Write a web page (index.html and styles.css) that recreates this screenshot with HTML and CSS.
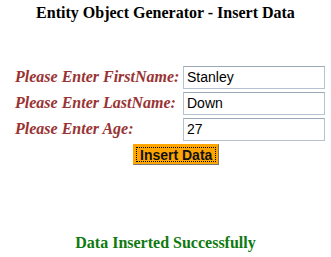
FILE: index.html
```html
<!DOCTYPE html>
<html lang="en">
<head>
  <meta charset="UTF-8"/>
  <title>Entity Object Generator - Insert Data</title>
  <link rel="stylesheet" href="styles.css">
</head>
<body>
<div class="page">
  <h3 class="title">Entity Object Generator - Insert Data</h3>

  <form class="entry-form" onsubmit="return false">
    <div class="row">
      <label for="first">Please Enter FirstName:</label>
      <input type="text" id="first" value="Stanley" />
    </div>
    <div class="row">
      <label for="last">Please Enter LastName:</label>
      <input type="text" id="last" value="Down" />
    </div>
    <div class="row">
      <label for="age">Please Enter Age:</label>
      <input type="text" id="age" value="27" />
    </div>
    <div class="actions">
      <button type="submit" class="insert-btn">Insert Data</button>
    </div>
  </form>

  <p class="status">Data Inserted Successfully</p>
</div>
</body>
</html>
```

FILE: styles.css
```css
body {
  margin: 0;
  background: #fff;
  font-family: "Liberation Serif", "Times New Roman", serif;
}

.page {
  width: 331px;
  padding-top: 4px;
}

.title {
  margin: 0;
  text-align: center;
  font-size: 16px;
  font-weight: bold;
  color: #000;
}

.entry-form {
  margin-top: 42px;
  padding-left: 15px;
}

.row {
  display: flex;
  align-items: center;
  height: 26px;
}

.row label {
  width: 168px;
  font-size: 16px;
  font-weight: bold;
  font-style: italic;
  color: #993333;
}

.row input {
  width: 142px;
  height: 23px;
  box-sizing: border-box;
  padding: 1px 3px;
  border: 1px solid #b5c3d0;
  border-top-color: #9aa8b8;
  font-family: "Liberation Sans", Arial, sans-serif;
  font-size: 14px;
  color: #000;
}

.actions {
  padding-left: 118px;
  margin-top: 2px;
}

.insert-btn {
  background: #ffa500;
  border: 1px solid #ffa500;
  border-right-color: #777;
  border-bottom-color: #777;
  outline: 1px dotted #000;
  outline-offset: -4px;
  font-family: "Liberation Sans", Arial, sans-serif;
  font-size: 14px;
  font-weight: bold;
  color: #111;
  padding: 0 6px;
  height: 21px;
}

.status {
  margin: 69px 0 0;
  text-align: center;
  font-size: 16px;
  font-weight: bold;
  color: #0f7a0f;
}
```
